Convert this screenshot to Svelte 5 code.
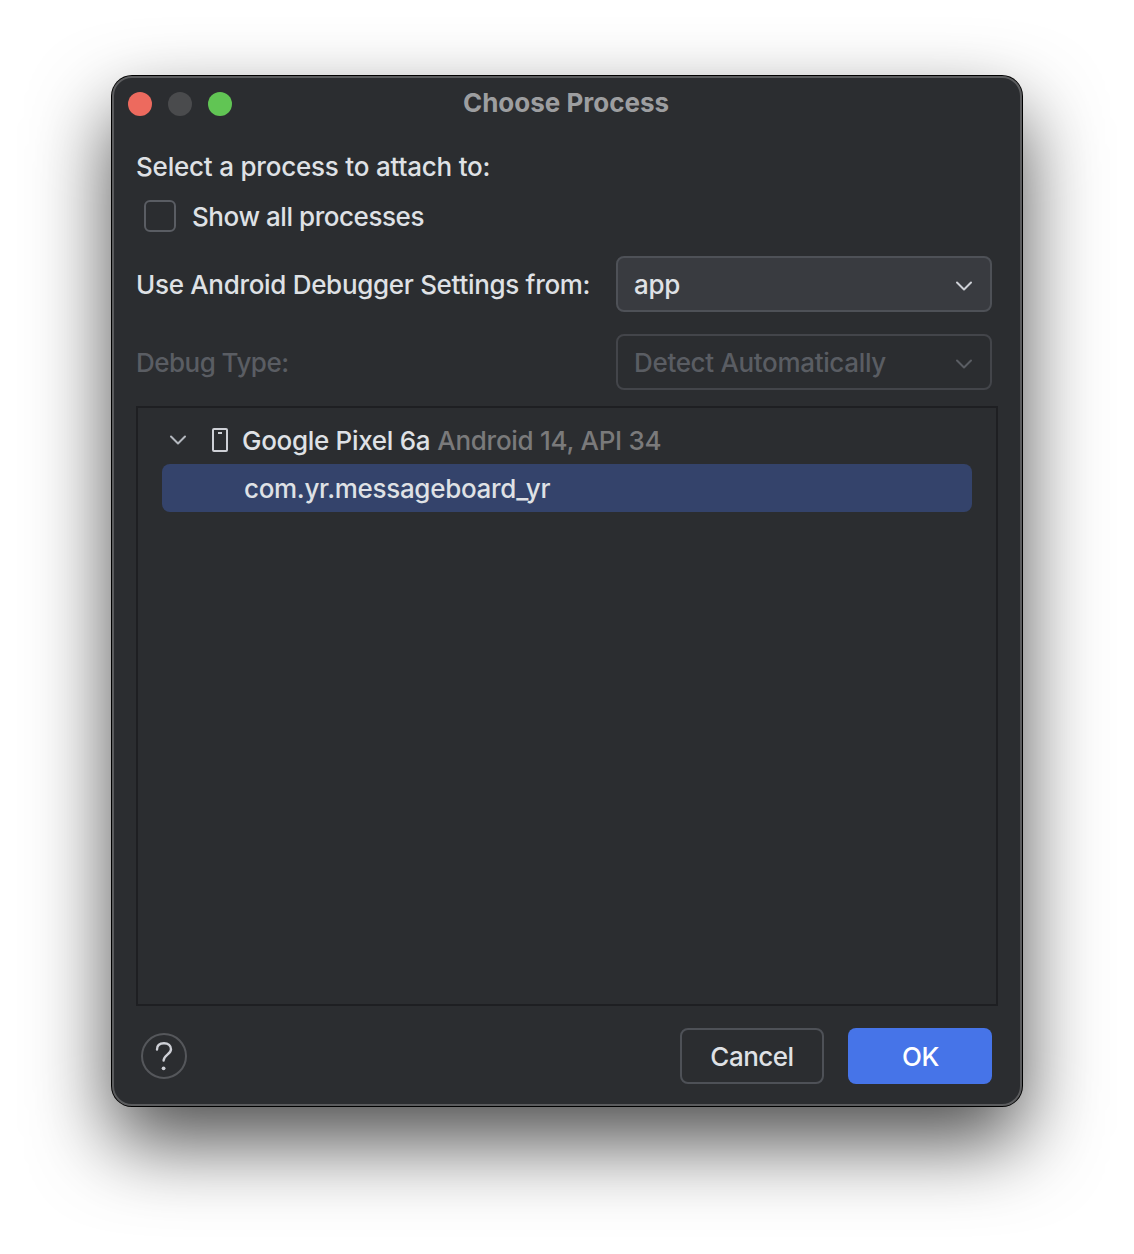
<script>
  const settings = [
    { label: 'Use Android Debugger Settings from:', value: 'app', disabled: false },
    { label: 'Debug Type:', value: 'Detect Automatically', disabled: true }
  ];
</script>

{#snippet chevron()}
  <svg class="chevron" width="20" height="12" viewBox="0 0 20 12" fill="none" stroke="currentColor" stroke-width="2" stroke-linecap="round" stroke-linejoin="round" aria-hidden="true">
    <path d="M3 2.5 L10 9.5 L17 2.5" />
  </svg>
{/snippet}

<main>
  <section class="dialog">
    <header>
      <div class="lights"><i class="close"></i><i class="min"></i><i class="zoom"></i></div>
      <h1>Choose Process</h1>
    </header>

    <p class="prompt"><span>Select a process to attach to:</span></p>
    <div class="check"><span class="box"></span><span class="check-label">Show all processes</span></div>

    <div class="settings">
      {#each settings as s}
        <div class="row" class:disabled={s.disabled}>
          <span class="label">{s.label}</span>
          <div class="select"><span>{s.value}</span>{@render chevron()}</div>
        </div>
      {/each}
    </div>

    <div class="tree">
      <div class="device">
        {@render chevron()}
        <svg class="phone" width="16" height="24" viewBox="0 0 16 24" fill="none" aria-hidden="true">
          <rect x="1" y="1" width="14" height="22" rx="1" stroke="#ced0d6" stroke-width="2" />
          <path d="M6 5H10" stroke="#ced0d6" stroke-width="2" />
        </svg>
        <span class="name">Google Pixel 6a</span>
        <span class="api">Android 14, API 34</span>
      </div>
      <div class="process"><span>com.yr.messageboard_yr</span></div>
    </div>

    <footer>
      <svg class="help" width="46" height="46" viewBox="0 0 46 46" fill="none" aria-label="Help">
        <circle cx="23" cy="23" r="22" stroke="#55575b" stroke-width="2" />
        <path d="M16 16.5 C16 12.3 19 10.2 23 10.2 C27.2 10.2 30 12.7 30 16.2 C30 21.4 22.6 22 22.6 27.6" stroke="#ced0d6" stroke-width="2.4" stroke-linecap="round" />
        <circle cx="22.6" cy="35.3" r="1.9" fill="#ced0d6" />
      </svg>
      <button class="cancel"><span>Cancel</span></button>
      <button class="ok"><span>OK</span></button>
    </footer>
  </section>
</main>

<style>
  :global(body) { background: #fff; overflow: hidden; }
  main {
    box-sizing: border-box;
    width: 1134px;
    height: 1254px;
    padding: 76px 112px 0;
    font: 450 26px/32px Inter, sans-serif;
    color: #dfe1e5;
    overflow: hidden;
  }
  .dialog {
    box-sizing: border-box;
    width: 910px;
    height: 1030px;
    padding: 0 24px 0 22px;
    border: 2px solid #5b5c5e;
    border-radius: 20px;
    background: #2b2d30;
    box-shadow: 0 0 0 1px #000, 0 36px 80px rgba(0, 0, 0, 0.7);
    display: flex;
    flex-direction: column;
  }
  header { display: grid; grid-template-columns: 1fr auto 1fr; align-items: center; height: 52px; margin: 0 -22px; }
  .lights { display: flex; gap: 16px; padding-left: 14px; }
  .lights i { width: 24px; height: 24px; border-radius: 50%; }
  .close { background: #ed6a5e; }
  .min { background: #4a4b4d; }
  .zoom { background: #61c554; }
  h1 { margin: 0; padding-bottom: 2px; font-size: 26px; line-height: 32px; font-weight: 700; color: #9d9ea0; }
  span, h1 { white-space: nowrap; }
  .prompt { margin: 21px 0 0; letter-spacing: -0.21px; }
  .check { display: flex; align-items: center; gap: 16px; height: 32px; margin: 17px 0 0 8px; }
  .check-label { padding-top: 2px; letter-spacing: -0.44px; }
  .box { box-sizing: border-box; width: 32px; height: 32px; border: 2px solid #5a5d63; border-radius: 6px; }
  .settings { margin-top: 24px; display: flex; flex-direction: column; gap: 22px; }
  .row { display: flex; align-items: center; justify-content: space-between; padding-right: 4px; }
  .label { padding-top: 2px; letter-spacing: -0.31px; }
  .disabled .label { letter-spacing: -0.53px; }
  .select {
    box-sizing: border-box;
    width: 376px;
    height: 56px;
    padding: 2px 16px 0;
    border: 2px solid #4e5157;
    border-radius: 8px;
    background: #393b40;
    display: flex;
    align-items: center;
    justify-content: space-between;
    letter-spacing: -0.33px;
  }
  .select .chevron { color: #ced0d6; margin-top: 2px; }
  .disabled { color: #5a5d63; }
  .disabled .select { background: none; border-color: #43454a; }
  .disabled .chevron { color: #5a5d63; }
  .tree {
    box-sizing: border-box;
    width: 862px;
    height: 600px;
    margin-top: 16px;
    padding: 8px 24px;
    border: 2px solid #1e1f22;
  }
  .device { display: flex; align-items: center; height: 48px; padding-left: 6px; }
  .device .chevron { color: #b4b8bf; }
  .device span { padding-top: 2px; letter-spacing: -0.3px; }
  .phone { margin: 0 14px 0 24px; }
  .device .api { color: #7a7a7b; margin-left: 7px; letter-spacing: -0.27px; }
  .process { display: flex; align-items: center; height: 48px; border-radius: 8px; background: #34436b; padding-left: 82px; width: 728px; letter-spacing: -0.31px; }
  .process span { padding-top: 2px; }
  footer { display: flex; align-items: center; margin-top: 22px; padding: 0 4px 0 5px; }
  .help { margin-right: auto; }
  button { box-sizing: border-box; width: 144px; height: 56px; padding: 2px 0 0; border-radius: 8px; font: inherit; color: inherit; letter-spacing: -0.5px; }
  .cancel { border: 2px solid #4e5157; background: none; margin-right: 24px; }
  .ok { border: 0; background: #4674e8; color: #fff; padding-left: 1px; letter-spacing: -0.3px; }
</style>
